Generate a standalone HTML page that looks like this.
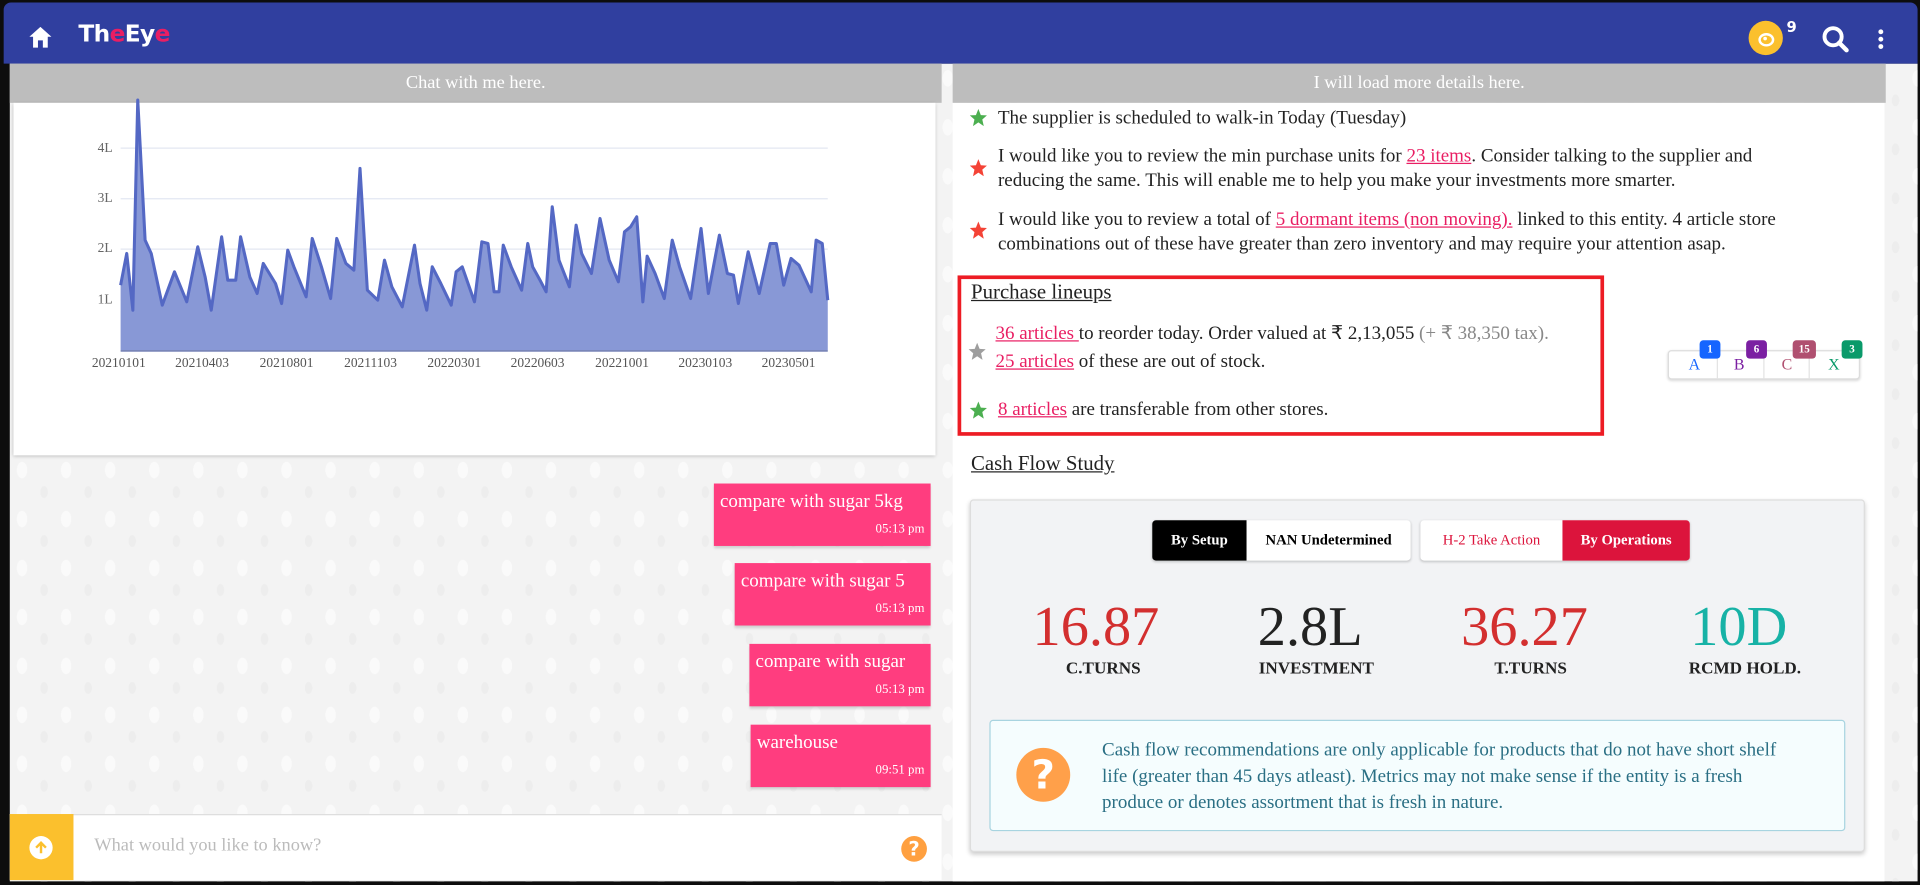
<!DOCTYPE html>
<html><head><meta charset="utf-8">
<style>
html,body{margin:0;padding:0;width:1920px;height:885px;overflow:hidden;background:#111;}
#w{position:absolute;left:0;top:0;width:1568px;height:723px;transform:scale(1.2245,1.2241);transform-origin:0 0;font-family:"Liberation Serif",serif;background:#0d0d0d;}
.abs{position:absolute;}
#hdr{left:3px;top:2px;width:1563px;height:50px;background:#303f9f;border-radius:6px 6px 0 0;}
.pat{background:#f3f3f3;background-image:radial-gradient(ellipse 7px 11px at 10px 12px,#fafafa 60%,transparent 62%),radial-gradient(ellipse 5px 8px at 28px 30px,#ededed 60%,transparent 62%);background-size:36px 40px;}
.bar{background:#bdbdbd;color:#fff;text-align:center;font-size:15px;line-height:32px;height:32px;}
.bub{position:absolute;right:8px;background:#ff3d7f;color:#fff;font-size:15.5px;padding:6px 5px 0 5px;box-shadow:0 2px 2px rgba(0,0,0,.15);}
.bub .t{font-size:10.5px;text-align:right;margin-top:8px;padding-bottom:7px;}
.txt{font-size:15.5px;color:#222;line-height:19.5px;}
a{color:#e91e63;text-decoration:underline;}
.star{position:absolute;width:14px;height:14px;}
.btn{position:absolute;top:0;height:33px;line-height:33px;font-size:12px;font-weight:bold;text-align:center;}
.num{position:absolute;width:200px;text-align:center;font-size:46px;top:486px;line-height:52px;}
.lab{position:absolute;width:200px;text-align:center;font-size:14px;font-weight:bold;top:539px;color:#222;}
.bdg{position:absolute;top:-9px;width:17px;height:15px;border-radius:3px;color:#fff;font-size:9px;font-weight:bold;text-align:center;line-height:15px;}
</style></head><body><div id="w">
<div class="abs pat" style="left:8px;top:52px;width:1558px;height:668px"></div>
<div id="hdr" class="abs">
 <svg class="abs" style="left:21px;top:20px" width="18" height="17" viewBox="0 0 18 17"><path d="M9 0 L18 8 L15 8 L15 17 L11 17 L11 11 L7 11 L7 17 L3 17 L3 8 L0 8 Z" fill="#fff"/></svg>
 <div class="abs" style="left:61px;top:15px;font-family:'DejaVu Sans',sans-serif;font-weight:bold;font-size:19px;color:#fff;letter-spacing:-0.5px">Th<span style="color:#e91e63">e</span>Ey<span style="color:#e91e63">e</span></div>
 <div class="abs" style="left:1425px;top:15px;width:28px;height:28px;border-radius:50%;background:#fbc02d"></div>
 <div class="abs" style="left:1433px;top:25px;width:9px;height:7px;border:2px solid #fff;border-radius:50%"></div>
 <div class="abs" style="left:1437px;top:28px;width:3px;height:3px;background:#fff;border-radius:50%"></div>
 <div class="abs" style="left:1456px;top:13px;color:#fff;font-size:12px;font-weight:bold;font-family:'DejaVu Sans',sans-serif">9</div>
 <svg class="abs" style="left:1484px;top:18px" width="24" height="24" viewBox="0 0 24 24"><circle cx="10" cy="10" r="7" stroke="#fff" stroke-width="3.2" fill="none"/><path d="M15 15 L21 21" stroke="#fff" stroke-width="3.6" stroke-linecap="round"/></svg>
 <div class="abs" style="left:1531px;top:22px;width:4px;height:4px;background:#fff;border-radius:50%;box-shadow:0 6px 0 #fff,0 12px 0 #fff"></div>
</div>

<!-- left panel -->
<div class="abs bar" style="left:8px;top:52px;width:761px">Chat with me here.</div>
<div class="abs" style="left:11px;top:84px;width:753px;height:288px;background:#fff;box-shadow:0 1px 3px rgba(0,0,0,.25)"></div>
<svg class="abs" style="left:0;top:0" width="784" height="376" viewBox="0 0 1568 1380" preserveAspectRatio="none">
 <g stroke="#e3e7f2" stroke-width="1">
  <line x1="197" y1="444" x2="1352" y2="444" vector-effect="non-scaling-stroke"/><line x1="197" y1="596" x2="1352" y2="596" vector-effect="non-scaling-stroke"/><line x1="197" y1="747" x2="1352" y2="747" vector-effect="non-scaling-stroke"/><line x1="197" y1="900" x2="1352" y2="900" vector-effect="non-scaling-stroke"/>
 </g>
 <polygon fill="#8898d6" points="197,1050 197,855 207,760 217,930 225,300 237,720 247,760 265,915 285,815 305,905 323,740 335,830 345,930 362,710 372,840 385,840 393,710 408,830 420,880 430,790 450,850 460,910 470,750 480,800 500,890 510,715 525,800 540,895 550,715 565,790 578,810 588,505 600,870 617,900 628,780 640,860 657,920 677,735 686,850 697,930 706,800 720,850 737,915 745,815 755,800 775,905 787,725 797,730 807,875 815,875 822,735 835,800 852,870 862,730 870,800 882,840 892,875 902,620 913,780 930,860 941,675 950,760 966,820 980,655 995,780 1010,845 1020,695 1030,680 1040,650 1050,905 1057,768 1070,820 1085,895 1098,720 1110,800 1128,895 1145,685 1157,880 1175,705 1188,820 1198,825 1206,910 1222,755 1240,880 1258,730 1268,730 1280,855 1292,775 1305,795 1325,875 1333,720 1343,730 1352,900 1352,1050"/>
 <polyline fill="none" stroke="#5468c4" stroke-width="2.5" vector-effect="non-scaling-stroke" stroke-linejoin="round" points="197,855 207,760 217,930 225,300 237,720 247,760 265,915 285,815 305,905 323,740 335,830 345,930 362,710 372,840 385,840 393,710 408,830 420,880 430,790 450,850 460,910 470,750 480,800 500,890 510,715 525,800 540,895 550,715 565,790 578,810 588,505 600,870 617,900 628,780 640,860 657,920 677,735 686,850 697,930 706,800 720,850 737,915 745,815 755,800 775,905 787,725 797,730 807,875 815,875 822,735 835,800 852,870 862,730 870,800 882,840 892,875 902,620 913,780 930,860 941,675 950,760 966,820 980,655 995,780 1010,845 1020,695 1030,680 1040,650 1050,905 1057,768 1070,820 1085,895 1098,720 1110,800 1128,895 1145,685 1157,880 1175,705 1188,820 1198,825 1206,910 1222,755 1240,880 1258,730 1268,730 1280,855 1292,775 1305,795 1325,875 1333,720 1343,730 1352,900"/>
 <line x1="197" y1="1052" x2="1352" y2="1052" stroke="#7a86b8" stroke-width="1.5" vector-effect="non-scaling-stroke"/>
</svg>
<div class="abs" style="left:60px;top:113px;width:32px;text-align:right;font-size:11px;color:#666;line-height:16px">4L</div>
<div class="abs" style="left:60px;top:154px;width:32px;text-align:right;font-size:11px;color:#666;line-height:16px">3L</div>
<div class="abs" style="left:60px;top:195px;width:32px;text-align:right;font-size:11px;color:#666;line-height:16px">2L</div>
<div class="abs" style="left:60px;top:237px;width:32px;text-align:right;font-size:11px;color:#666;line-height:16px">1L</div>
<div class="abs" style="left:0;top:291px;width:784px;font-size:11px;color:#555">
 <span class="abs" style="left:75px">20210101</span><span class="abs" style="left:143px">20210403</span><span class="abs" style="left:212px">20210801</span><span class="abs" style="left:281px">20211103</span><span class="abs" style="left:349px">20220301</span><span class="abs" style="left:417px">20220603</span><span class="abs" style="left:486px">20221001</span><span class="abs" style="left:554px">20230103</span><span class="abs" style="left:622px">20230501</span>
</div>

<div class="bub" style="top:395px;right:808px;width:167px;height:45px">compare with sugar 5kg<div class="t">05:13 pm</div></div>
<div class="bub" style="top:460px;right:808px;width:150px;height:45px">compare with sugar 5<div class="t">05:13 pm</div></div>
<div class="bub" style="top:526px;right:808px;width:138px;height:45px">compare with sugar<div class="t">05:13 pm</div></div>
<div class="bub" style="top:592px;right:808px;width:137px;height:45px">warehouse<div class="t">09:51 pm</div></div>

<div class="abs" style="left:8px;top:665px;width:761px;height:53px;background:#fff;border-top:1px solid #ddd"></div>
<div class="abs" style="left:8px;top:665px;width:52px;height:54px;background:#fbc02d"></div>
<div class="abs" style="left:24px;top:683px;width:19px;height:19px;border-radius:50%;background:#fff"></div>
<svg class="abs" style="left:24px;top:683px" width="19" height="19" viewBox="0 0 19 19"><path d="M9.5 14 V5.5 M5.5 9.5 L9.5 5.5 L13.5 9.5" stroke="#fbc02d" stroke-width="2" fill="none"/></svg>
<div class="abs" style="left:77px;top:683px;font-size:15px;color:#bbb">What would you like to know?</div>
<div class="abs" style="left:736px;top:683px;width:21px;height:21px;border-radius:50%;background:#ffa040;color:#fff;font-weight:bold;font-size:16px;text-align:center;line-height:21px;font-family:'DejaVu Sans',sans-serif">?</div>

<!-- right panel -->
<div class="abs" style="left:778px;top:84px;width:761px;height:636px;background:#fff"></div>
<div class="abs bar" style="left:778px;top:52px;width:762px">I will load more details here.</div>

<svg width="0" height="0" style="position:absolute"><defs><path id="st" d="M7 0 L9 5 L14 5.3 L10.2 8.6 L11.4 14 L7 11 L2.6 14 L3.8 8.6 L0 5.3 L5 5 Z"/></defs></svg>
<svg class="star" style="left:792px;top:89px" viewBox="0 0 14 14"><use href="#st" fill="#4caf50"/></svg>
<div class="abs txt" style="left:815px;top:87px">The supplier is scheduled to walk-in Today (Tuesday)</div>
<svg class="star" style="left:792px;top:130px" viewBox="0 0 14 14"><use href="#st" fill="#f44336"/></svg>
<div class="abs txt" style="left:815px;top:118px;width:665px">I would like you to review the min purchase units for <a>23 items</a>. Consider talking to the supplier and reducing the same. This will enable me to help you make your investments more smarter.</div>
<svg class="star" style="left:792px;top:181px" viewBox="0 0 14 14"><use href="#st" fill="#f44336"/></svg>
<div class="abs txt" style="left:815px;top:170px;width:712px">I would like you to review a total of <a>5 dormant items (non moving).</a> linked to this entity. 4 article store combinations out of these have greater than zero inventory and may require your attention asap.</div>

<div class="abs" style="left:782px;top:225px;width:522px;height:125px;border:3px solid #ed1c24"></div>
<div class="abs" style="left:793px;top:229px;font-size:17px;color:#222;text-decoration:underline">Purchase lineups</div>
<svg class="star" style="left:791px;top:280px" viewBox="0 0 14 14"><use href="#st" fill="#9e9e9e"/></svg>
<div class="abs txt" style="left:813px;top:263px"><a>36 articles </a>to reorder today. Order valued at ₹ 2,13,055 <span style="color:#888">(+ ₹ 38,350 tax).</span></div>
<div class="abs txt" style="left:813px;top:286px"><a>25 articles</a> of these are out of stock.</div>
<svg class="star" style="left:792px;top:328px" viewBox="0 0 14 14"><use href="#st" fill="#4caf50"/></svg>
<div class="abs txt" style="left:815px;top:325px"><a>8 articles</a> are transferable from other stores.</div>

<div class="abs" style="left:1362px;top:286px;width:155px;height:22px;border:1px solid #ddd;border-radius:3px;box-shadow:0 1px 2px rgba(0,0,0,.15);background:#fff;font-size:13px;line-height:22px">
 <span class="abs" style="left:16px;color:#1565ff">A</span><span class="abs" style="left:39px;top:0;height:22px;border-left:1px solid #e3e3e3"></span>
 <span class="abs" style="left:53px;color:#7b1fa2">B</span><span class="abs" style="left:77px;top:0;height:22px;border-left:1px solid #e3e3e3"></span>
 <span class="abs" style="left:92px;color:#b05070">C</span><span class="abs" style="left:114px;top:0;height:22px;border-left:1px solid #e3e3e3"></span>
 <span class="abs" style="left:130px;color:#0a9a6a">X</span>
 <div class="bdg" style="left:25px;background:#1565ff">1</div>
 <div class="bdg" style="left:63px;background:#7b1fa2">6</div>
 <div class="bdg" style="left:101px;background:#b05070;width:19px">15</div>
 <div class="bdg" style="left:141px;background:#0a9a6a">3</div>
</div>

<div class="abs" style="left:793px;top:369px;font-size:17px;color:#222;text-decoration:underline">Cash Flow Study</div>
<div class="abs" style="left:792px;top:408px;width:729px;height:286px;background:#f2f3f5;border:1px solid #ddd;border-radius:3px;box-shadow:0 2px 4px rgba(0,0,0,.2)"></div>
<div class="abs" style="left:941px;top:425px;width:211px;height:33px;background:#fff;border-radius:3px;box-shadow:0 1px 2px rgba(0,0,0,.2)">
 <div class="btn" style="left:0;width:77px;background:#000;color:#fff;border-radius:3px 0 0 3px">By Setup</div>
 <div class="btn" style="left:77px;width:134px;color:#000">NAN Undetermined</div>
</div>
<div class="abs" style="left:1160px;top:425px;width:220px;height:33px;background:#fff;border-radius:3px;box-shadow:0 1px 2px rgba(0,0,0,.2)">
 <div class="btn" style="left:0;width:116px;color:#dc143c;font-weight:normal">H-2 Take Action</div>
 <div class="btn" style="left:116px;width:104px;background:#dc143c;color:#fff;border-radius:0 3px 3px 0">By Operations</div>
</div>
<div class="num" style="left:795px;color:#d32f2f">16.87</div>
<div class="num" style="left:970px;color:#222">2.8L</div>
<div class="num" style="left:1145px;color:#d32f2f">36.27</div>
<div class="num" style="left:1320px;color:#17b2a6">10D</div>
<div class="lab" style="left:801px">C.TURNS</div>
<div class="lab" style="left:975px">INVESTMENT</div>
<div class="lab" style="left:1150px">T.TURNS</div>
<div class="lab" style="left:1325px">RCMD HOLD.</div>

<div class="abs" style="left:808px;top:588px;width:697px;height:89px;background:#f5fdfe;border:1px solid #a8d4e0;border-radius:3px"></div>
<div class="abs" style="left:830px;top:611px;width:44px;height:44px;border-radius:50%;background:#ffa04a;color:#fff;font-size:33px;font-weight:bold;text-align:center;line-height:44px;font-family:'DejaVu Sans',sans-serif">?</div>
<div class="abs" style="left:900px;top:602px;width:560px;font-size:15.5px;line-height:21.5px;color:#2a6f84">Cash flow recommendations are only applicable for products that do not have short shelf life (greater than 45 days atleast). Metrics may not make sense if the entity is a fresh produce or denotes assortment that is fresh in nature.</div>
</div></body></html>
